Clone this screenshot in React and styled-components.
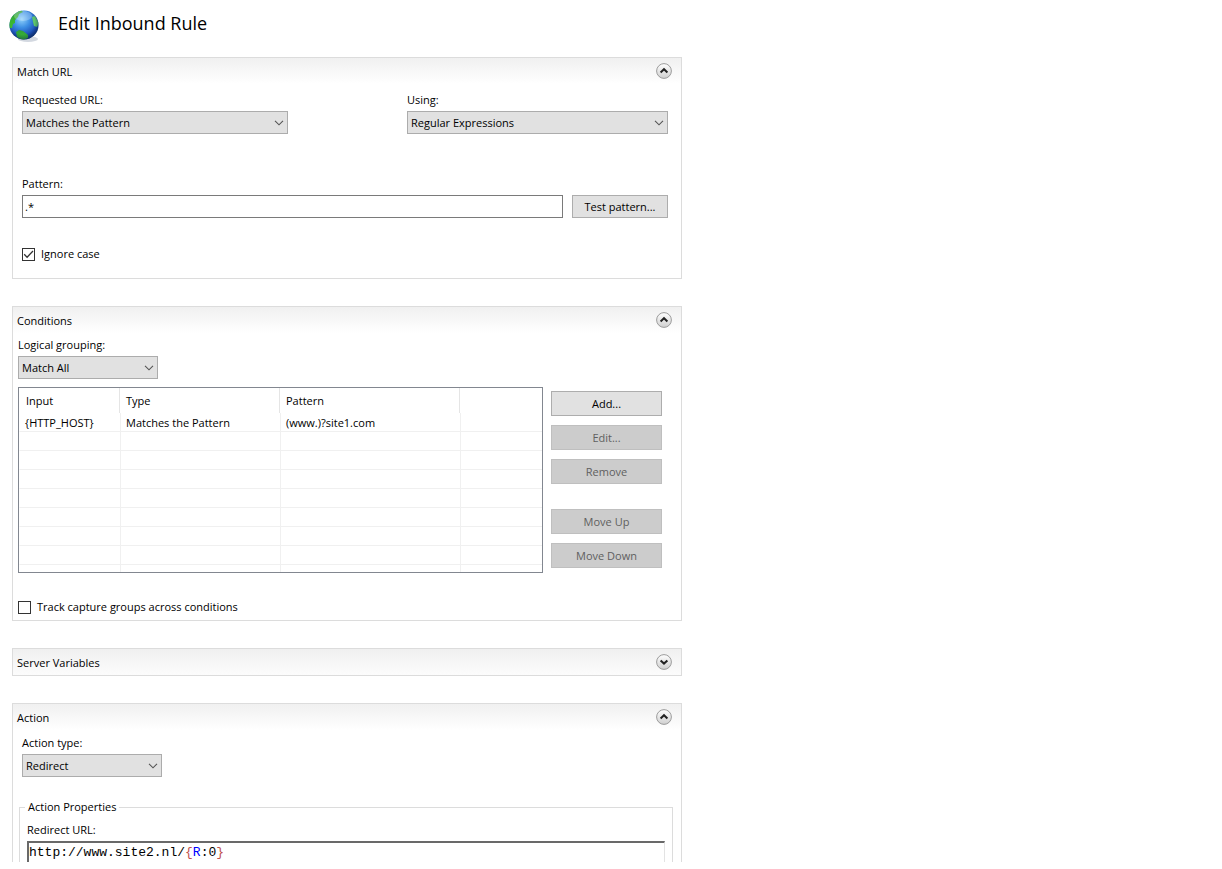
import { useState } from "react";
import styled, { createGlobalStyle } from "styled-components";

const conditions = [
  { input: "{HTTP_HOST}", type: "Matches the Pattern", pattern: "(www.)?site1.com" },
];
const emptyRows = [1, 2, 3, 4, 5, 6, 7];

function Globe() {
  return (
    <svg width="32" height="34" viewBox="0 0 32 34" aria-hidden="true">
      <defs>
        <radialGradient id="sea" cx="0.42" cy="0.3" r="0.72">
          <stop offset="0" stopColor="#8fd0fa" />
          <stop offset="0.4" stopColor="#3d8fe4" />
          <stop offset="0.8" stopColor="#1a4cb4" />
          <stop offset="1" stopColor="#10307e" />
        </radialGradient>
        <linearGradient id="land" x1="0" y1="0" x2="0" y2="1">
          <stop offset="0" stopColor="#2f9e3c" />
          <stop offset="1" stopColor="#3fc02e" />
        </linearGradient>
        <radialGradient id="shade" cx="0.45" cy="0.4" r="0.6">
          <stop offset="0.7" stopColor="#0a2a50" stopOpacity="0" />
          <stop offset="1" stopColor="#0a2a50" stopOpacity="0.5" />
        </radialGradient>
        <clipPath id="ball">
          <circle cx="15" cy="16" r="14.5" />
        </clipPath>
      </defs>
      <ellipse cx="19" cy="30" rx="10" ry="3" fill="#d3d8e0" />
      <circle cx="15" cy="16" r="14.5" fill="url(#sea)" />
      <g clipPath="url(#ball)" fill="url(#land)">
        <path d="M0 19 L0 9 L6 2 L12 1 L14 3 L10 5 L9 8 L6 11 L6 14 L4 15 L3 19 Z" />
        <path d="M7 23 L10 21 L14 22 L19 26 L19 29 L14 31 L8 28 Z" />
        <path d="M23 8 L26 7 L30 14 L28 18 L25 17 L24 13 Z" fill="#5ec46c" />
      </g>
      <circle cx="15" cy="16" r="14.5" fill="url(#shade)" />
      <ellipse cx="14" cy="7" rx="9" ry="5" fill="#fff" opacity="0.25" />
    </svg>
  );
}

function Toggle({ open, onClick, label }) {
  return (
    <ToggleButton type="button" onClick={onClick} aria-expanded={open} aria-label={label}>
      <svg width="16" height="16" viewBox="0 0 16 16">
        <defs>
          <linearGradient id="knob" x1="0" y1="0" x2="0" y2="1">
            <stop offset="0" stopColor="#ffffff" />
            <stop offset="1" stopColor="#cfcfcf" />
          </linearGradient>
        </defs>
        <circle cx="8" cy="8" r="7.4" fill="url(#knob)" stroke="#9c9c9c" />
        <path
          d={open ? "M4.6 9.4 L8 6.2 L11.4 9.4" : "M4.6 6.4 L8 9.6 L11.4 6.4"}
          fill="none"
          stroke="#222"
          strokeWidth="2"
        />
      </svg>
    </ToggleButton>
  );
}

function Panel({ title, startOpen = true, cut, children }) {
  const [open, setOpen] = useState(startOpen);

  return (
    <Section $cut={cut}>
      <PanelHead $open={open}>
        <h2>{title}</h2>
        <Toggle open={open} onClick={() => setOpen(!open)} label={title} />
      </PanelHead>
      {open && children}
    </Section>
  );
}

function Dropdown({ id, label, width, options }) {
  return (
    <Field>
      <label htmlFor={id}>{label}</label>
      <SelectBox $width={width}>
        <select id={id}>
          {options.map((option) => (
            <option key={option}>{option}</option>
          ))}
        </select>
        <svg width="10" height="6" viewBox="0 0 10 6" aria-hidden="true">
          <path d="M1 0.8 L5 4.8 L9 0.8" fill="none" stroke="#555" strokeWidth="1.1" />
        </svg>
      </SelectBox>
    </Field>
  );
}

function App() {
  return (
    <Page>
      <GlobalStyle />
      <PageHead>
        <Globe />
        <h1>Edit Inbound Rule</h1>
      </PageHead>

      <Panel title="Match URL">
        <MatchBody>
          <SplitRow>
            <Dropdown
              id="requested"
              label="Requested URL:"
              width={266}
              options={["Matches the Pattern", "Does Not Match the Pattern"]}
            />
            <Dropdown
              id="using"
              label="Using:"
              width={261}
              options={["Regular Expressions", "Wildcards", "Exact Match"]}
            />
          </SplitRow>
          <Field>
            <label htmlFor="pattern">Pattern:</label>
            <PatternRow>
              <TextInput id="pattern" type="text" defaultValue=".*" />
              <TestButton type="button">Test pattern...</TestButton>
            </PatternRow>
          </Field>
          <Check>
            <input type="checkbox" defaultChecked />
            Ignore case
          </Check>
        </MatchBody>
      </Panel>

      <Panel title="Conditions">
        <ConditionsBody>
          <Dropdown
            id="grouping"
            label="Logical grouping:"
            width={140}
            options={["Match All", "Match Any"]}
          />
          <ListRow>
            <TableFrame>
              <Table>
                <colgroup>
                  <col width="101" />
                  <col width="160" />
                  <col width="180" />
                  <col />
                </colgroup>
                <thead>
                  <tr>
                    <th>Input</th>
                    <th>Type</th>
                    <th>Pattern</th>
                    <th></th>
                  </tr>
                </thead>
                <tbody>
                  {conditions.map((row) => (
                    <tr key={row.input}>
                      <td>{row.input}</td>
                      <td>{row.type}</td>
                      <td>{row.pattern}</td>
                      <td></td>
                    </tr>
                  ))}
                  {emptyRows.map((n) => (
                    <tr key={n}>
                      <td></td>
                      <td></td>
                      <td></td>
                      <td></td>
                    </tr>
                  ))}
                  <LastRow>
                    <td></td>
                    <td></td>
                    <td></td>
                    <td></td>
                  </LastRow>
                </tbody>
              </Table>
            </TableFrame>
            <ButtonColumn>
              <ButtonGroup>
                <Button type="button">Add...</Button>
                <Button type="button" disabled>Edit...</Button>
                <Button type="button" disabled>Remove</Button>
              </ButtonGroup>
              <ButtonGroup>
                <Button type="button" disabled>Move Up</Button>
                <Button type="button" disabled>Move Down</Button>
              </ButtonGroup>
            </ButtonColumn>
          </ListRow>
          <Check>
            <input type="checkbox" />
            Track capture groups across conditions
          </Check>
        </ConditionsBody>
      </Panel>

      <Panel title="Server Variables" startOpen={false} />

      <Panel title="Action" cut>
        <ActionBody>
          <Dropdown
            id="action"
            label="Action type:"
            width={140}
            options={["Redirect", "Rewrite", "None", "Custom Response", "Abort Request"]}
          />
        </ActionBody>
        <Group>
          <legend>Action Properties</legend>
          <Field>
            <span id="redirect-label">Redirect URL:</span>
            <Editor
              role="textbox"
              aria-labelledby="redirect-label"
              contentEditable
              suppressContentEditableWarning
              spellCheck={false}
            >
              http://www.site2.nl/<Brace>{"{"}</Brace>
              <Ref>R</Ref>:0<Brace>{"}"}</Brace>
            </Editor>
          </Field>
        </Group>
      </Panel>
    </Page>
  );
}

const GlobalStyle = createGlobalStyle`
  * {
    box-sizing: border-box;
  }

  body {
    margin: 0;
    background: #fff;
    color: #000;
    font-family: "Open Sans", "Noto Sans", sans-serif;
    font-size: 11px;
    line-height: 16px;
  }

  input, select, button {
    font: inherit;
    color: inherit;
    border-radius: 0;
    margin: 0;
  }
`;

const Page = styled.main`
  max-width: 694px;
  padding: 0 12px;
  display: flex;
  flex-direction: column;
  gap: 27px;
`;

const PageHead = styled.header`
  display: flex;
  align-items: flex-start;
  gap: 17px;
  height: 30px;
  margin-left: -3px;
  padding-top: 9px;

  svg {
    flex: none;
  }

  h1 {
    margin: 0;
    font-size: 18px;
    line-height: 28px;
    font-weight: 400;
  }
`;

const Section = styled.section`
  border: 1px solid #dcdcdc;
  border-bottom-width: ${(props) => (props.$cut ? 0 : 1)}px;
`;

const PanelHead = styled.div`
  display: flex;
  align-items: center;
  justify-content: space-between;
  height: 26px;
  padding: 0 9px 0 4px;
  background: linear-gradient(#f0f0f0, ${(props) => (props.$open ? "#fff" : "#fcfcfc")});

  h2 {
    margin: 0;
    padding-top: 2px;
    font-size: 11px;
    font-weight: 400;
  }
`;

const ToggleButton = styled.button`
  padding: 0;
  border: 0;
  background: none;
  line-height: 0;
`;

const Field = styled.div`
  display: flex;
  flex-direction: column;
  gap: 3px;
`;

const SelectBox = styled.div`
  display: grid;
  align-items: center;
  width: ${(props) => props.$width}px;
  max-width: 100%;

  select {
    grid-area: 1 / 1;
    appearance: none;
    height: 23px;
    padding: 0 20px 0 3px;
    border: 1px solid #acacac;
    background: #e1e1e1;
  }

  svg {
    grid-area: 1 / 1;
    justify-self: end;
    margin-right: 4px;
    pointer-events: none;
  }
`;

const MatchBody = styled.div`
  padding: 8px 13px 16px 9px;
`;

const SplitRow = styled.div`
  display: flex;
  justify-content: space-between;
  gap: 16px;
  margin-bottom: 42px;
`;

const PatternRow = styled.div`
  display: flex;
  gap: 9px;
  margin-bottom: 28px;
`;

const TextInput = styled.input`
  flex: 1;
  min-width: 0;
  height: 23px;
  padding: 0 2px;
  border: 1px solid #7a7a7a;
`;

const Button = styled.button`
  height: 25px;
  padding: 0;
  border: 1px solid #adadad;
  background: #e1e1e1;

  &:disabled {
    border-color: #bfbfbf;
    background: #ccc;
    color: #606060;
  }
`;

const TestButton = styled(Button)`
  width: 96px;
  height: 23px;
`;

const Check = styled.label`
  display: flex;
  align-items: center;
  gap: 6px;

  input {
    appearance: none;
    width: 13px;
    height: 13px;
    border: 1px solid #333;
    background: #fff;
  }

  input:checked {
    background: url("data:image/svg+xml,%3Csvg xmlns='http://www.w3.org/2000/svg' viewBox='0 0 11 11'%3E%3Cpath d='M1.2 5.3 L4.1 8.2 L10 2' fill='none' stroke='%23333' stroke-width='1.3'/%3E%3C/svg%3E");
  }
`;

const ConditionsBody = styled.div`
  padding: 4px 19px 5px 5px;
`;

const ListRow = styled.div`
  display: flex;
  gap: 8px;
  margin: 8px 0 26px;
`;

const TableFrame = styled.div`
  flex: 1;
  min-width: 0;
  border: 1px solid #828790;
`;

const Table = styled.table`
  width: 100%;
  table-layout: fixed;
  border-spacing: 0;

  th {
    height: 25px;
    padding: 0 6px;
    border-right: 1px solid #e5e5e5;
    font-weight: 400;
    text-align: left;
  }

  td {
    height: 19px;
    padding: 2px 5px 0;
    border-left: 1px solid #f0f0f0;
    border-bottom: 1px solid #f0f0f0;
  }

  th:first-child {
    padding-left: 7px;
  }

  td:first-child {
    border-left-color: transparent;
  }

  th:last-child {
    border-right: 0;
  }
`;

const LastRow = styled.tr`
  td {
    height: 7px;
    border-bottom: 0;
  }
`;

const ButtonColumn = styled.div`
  display: flex;
  flex-direction: column;
  gap: 25px;
  width: 111px;
  padding-top: 4px;
`;

const ButtonGroup = styled.div`
  display: flex;
  flex-direction: column;
  gap: 9px;
`;

const ActionBody = styled.div`
  padding: 5px 9px 22px;
`;

const Group = styled.fieldset`
  min-width: 0;
  margin: 0 8px 0 6px;
  padding: 7px 7px 0;
  border: 1px solid #dcdcdc;
  border-bottom: 0;

  legend {
    margin-left: -2px;
    padding: 0 3px;
  }
`;

const Editor = styled.div`
  height: 21px;
  border: 2px solid #696969;
  border-right: 1px solid #e3e3e3;
  border-bottom: 0;
  font: 13px/20px "Liberation Mono", monospace;
  white-space: pre;
  overflow: hidden;
`;

const Brace = styled.span`
  color: #c0504d;
`;

const Ref = styled.span`
  color: #00f;
`;

export default App;
